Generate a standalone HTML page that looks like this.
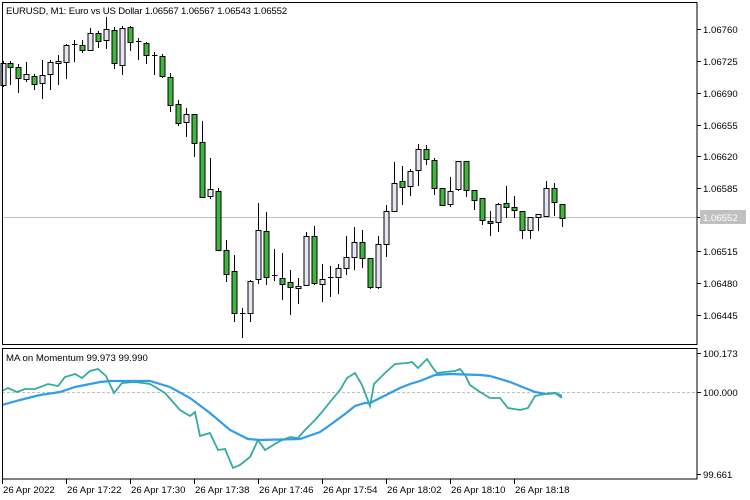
<!DOCTYPE html>
<html><head><meta charset="utf-8"><style>
html,body{margin:0;padding:0;background:#fff;width:750px;height:500px;overflow:hidden}
svg{display:block}
text{font-family:"Liberation Sans",sans-serif;font-size:9.6px;fill:#000}
</style></head><body>
<svg id="s" width="750" height="500" xmlns="http://www.w3.org/2000/svg">
<rect x="0" y="0" width="750" height="500" fill="#fff"/>
<line x1="2" y1="217.5" x2="697" y2="217.5" stroke="#c0c0c0" stroke-width="1"/>
<line x1="2" y1="392.5" x2="697" y2="392.5" stroke="#c0c0c0" stroke-width="1" stroke-dasharray="3,2"/>
<g id="c"></g>
<polyline fill="none" stroke="#2f9cee" stroke-width="2.2" points="2,405 20,400 40,395 60,392 75,387 90,384 100,382 110,381 150,381 170,387 190,398 210,413 230,430 248,439 260,440 300,439 320,432 330,425 345,414 355,406 365,403 370,403 380,398 390,393 400,388 410,384 420,381 435,375 450,374 480,375 490,376 510,382 525,388 535,392 545,394 555,393 562,396"/>
<polyline fill="none" stroke="#35ab9f" stroke-width="1.8" points="2,391 8,388 17,392 25,389 35,389 48,384 58,386 65,377 75,374 82,378 90,371 98,369 106,376 114,393 122,383 135,382 150,384 165,393 180,410 190,416 195,412 200,436 210,433 218,450 225,449 233,468 240,465 250,457 258,440 265,450 280,441 290,437 298,438 305,430 315,420 322,412 330,402 340,390 347,378 355,373 362,385 370,406 374,384 385,373 395,364 407,363 412,362 418,368 427,359 433,368 437,373 445,372 455,371 460,369 465,375 470,385 480,392 490,398 500,398 508,408 520,410 528,408 535,396 545,394 555,393 562,398"/>
<rect x="2.5" y="2.5" width="694.5" height="342" fill="none" stroke="#000"/>
<rect x="2.5" y="348.5" width="694.5" height="130.5" fill="none" stroke="#000"/>
<text x="6" y="14" style="letter-spacing:-0.15px">EURUSD, M1:  Euro vs US Dollar  1.06567 1.06567 1.06543 1.06552</text>
<text x="6" y="361">MA on Momentum 99.973 99.990</text>
<g id="ax"></g>
<rect x="700" y="210" width="46" height="14" fill="#c0c0c0"/>
<text x="703" y="221" style="fill:#fff">1.06552</text>
<text x="703" y="357">100.173</text>
<text x="703" y="396">100.000</text>
<text x="703" y="478">99.661</text>
<line x1="697" y1="353.5" x2="701" y2="353.5" stroke="#000"/>
<line x1="697" y1="392.5" x2="701" y2="392.5" stroke="#000"/>
<line x1="697" y1="474.5" x2="701" y2="474.5" stroke="#000"/>
</svg>
<script>
var NS="http://www.w3.org/2000/svg";
function el(t,a,p){var e=document.createElementNS(NS,t);for(var k in a)e.setAttribute(k,a[k]);p.appendChild(e);return e;}
var C=[[3,'w',63,85,61,87],[10,'g',63,67,61,85],[18,'g',67,78,64,93],[26,'w',74,79,62,82],[34,'g',76,84,74,90],[42,'w',75,83,60,99],[50,'w',62,74,60,90],[58,'w',61,63,55,85],[66,'w',45,62,44,79],[74,'x',44,44,40,62],[82,'g',45,50,40,53],[90,'w',33,50,28,50],[98,'g',33,41,31,48],[106,'w',29,40,17,49],[114,'g',30,63,27,69],[122,'w',28,65,26,75],[130,'g',27,42,26,51],[138,'x',41,41,38,60],[146,'g',43,55,42,64],[154,'x',55,55,52,75],[162,'g',56,76,54,78],[170,'g',77,105,73,112],[178,'g',104,123,100,126],[186,'w',114,122,108,137],[194,'g',114,143,114,157],[202,'g',142,197,121,197],[210,'w',189,196,158,199],[218,'g',191,250,188,250],[226,'g',250,274,240,282],[234,'g',271,313,255,322],[242,'x',313,313,308,338],[250,'w',281,313,280,322],[258,'w',230,279,203,284],[266,'g',231,277,212,285],[274,'x',275,275,249,281],[282,'g',278,284,253,300],[290,'g',282,287,270,315],[298,'w',286,288,278,304],[306,'w',236,285,232,286],[314,'g',236,283,226,285],[322,'w',279,284,264,302],[330,'x',277,277,266,297],[338,'w',268,277,264,294],[346,'w',257,268,236,275],[354,'w',242,257,227,270],[362,'g',242,258,230,268],[370,'g',258,287,258,289],[378,'w',244,287,236,289],[386,'w',211,244,205,257],[394,'w',183,211,162,212],[402,'g',181,187,166,205],[410,'w',171,186,169,196],[418,'w',149,170,144,186],[426,'g',149,159,145,165],[434,'g',160,188,158,195],[442,'g',188,205,188,206],[450,'w',191,204,177,207],[458,'w',161,189,161,191],[466,'g',161,190,161,197],[474,'g',190,200,190,210],[482,'g',198,220,198,225],[490,'g',221,223,211,236],[498,'w',204,222,203,232],[506,'g',203,207,186,218],[514,'g',207,210,196,218],[522,'g',211,230,211,239],[530,'w',217,230,217,239],[538,'w',214,217,214,231],[546,'w',188,216,181,217],[554,'g',188,202,183,216],[562,'g',204,218,204,227]];
var g=document.getElementById('c');
C.forEach(function(c){var x=c[0]+0.5;
el('line',{x1:x,y1:c[4],x2:x,y2:c[5],stroke:'#000','stroke-width':1},g);
if(c[1]=='x'){el('line',{x1:x-2.5,y1:c[2]+0.5,x2:x+3,y2:c[2]+0.5,stroke:'#000','stroke-width':1},g);}
else el('rect',{x:x-2.5,y:c[2]+0.5,width:5,height:Math.max(1,c[3]-c[2]),fill:c[1]=='g'?'#3db83d':'#e6e6f5',stroke:'#000','stroke-width':1},g);});
var ax=document.getElementById('ax');
[['1.06760',29],['1.06725',61],['1.06690',93],['1.06655',125],['1.06620',156],['1.06585',188],['1.06515',251],['1.06480',283],['1.06445',315]].forEach(function(p){
el('line',{x1:697,y1:p[1]+0.5,x2:701,y2:p[1]+0.5,stroke:'#000'},ax);
var t=el('text',{x:703,y:p[1]+4},ax);t.textContent=p[0];});
el('line',{x1:697,y1:217.5,x2:701,y2:217.5,stroke:'#000'},ax);
var T=['26 Apr 2022','26 Apr 17:22','26 Apr 17:30','26 Apr 17:38','26 Apr 17:46','26 Apr 17:54','26 Apr 18:02','26 Apr 18:10','26 Apr 18:18'];
T.forEach(function(s,i){var x=2+64*i;
el('line',{x1:x+0.5,y1:479,x2:x+0.5,y2:484,stroke:'#000'},ax);
var t=el('text',{x:x+1,y:493},ax);t.textContent=s;});
</script>
</body></html>
